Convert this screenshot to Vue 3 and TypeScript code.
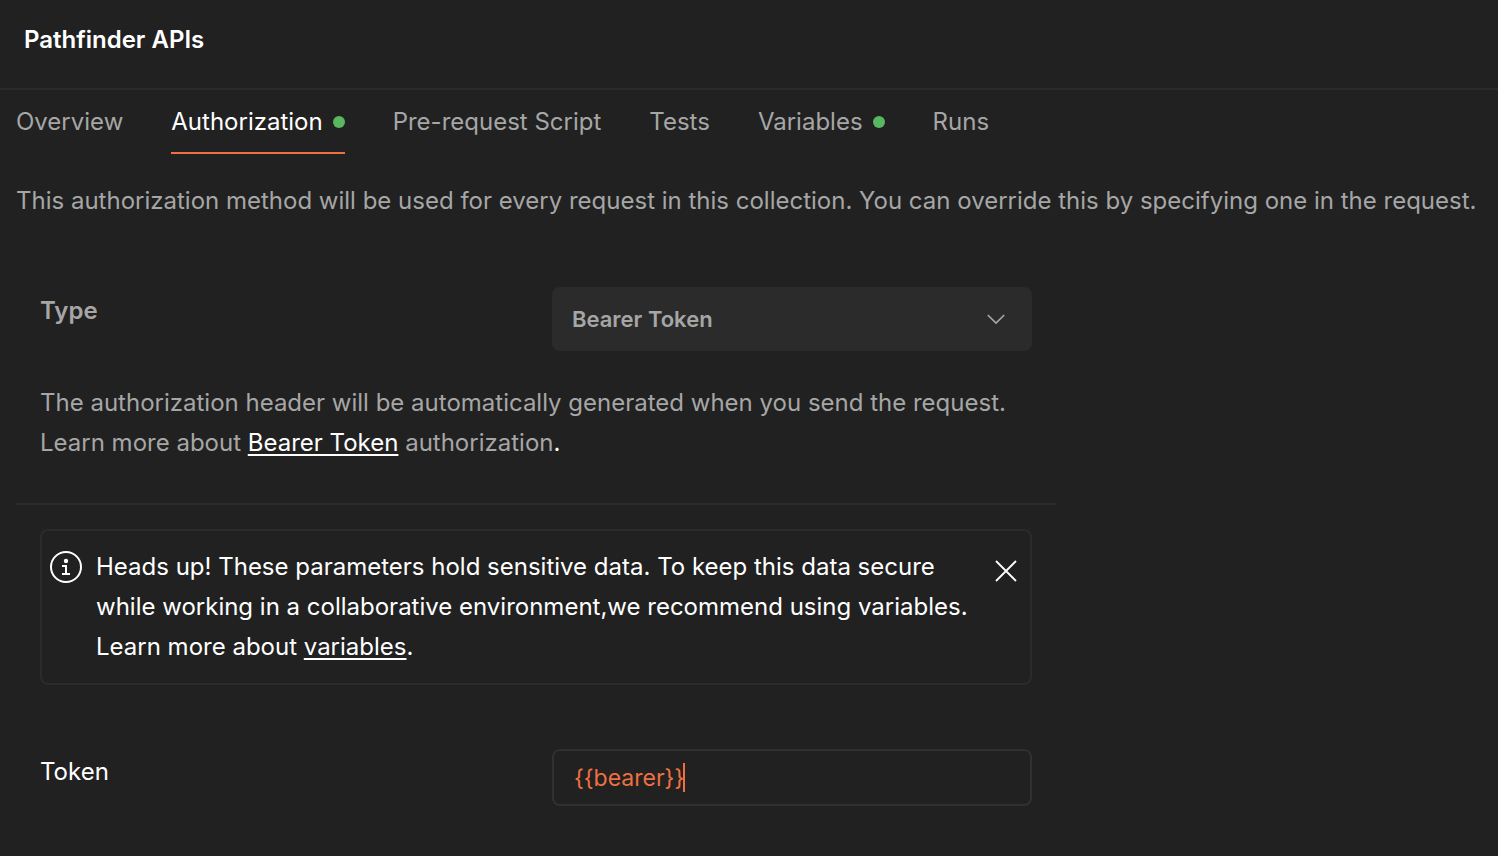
<script setup lang="ts">
import { nextTick, onMounted, ref, watch } from 'vue'

interface Tab {
  label: string
  configured: boolean
}

const tabs: Tab[] = [
  { label: 'Overview', configured: false },
  { label: 'Authorization', configured: true },
  { label: 'Pre-request Script', configured: false },
  { label: 'Tests', configured: false },
  { label: 'Variables', configured: true },
  { label: 'Runs', configured: false },
]

const activeTab = ref('Authorization')
const authType = ref('Bearer Token')
const noticeVisible = ref(true)
const token = ref('{' + '{bearer}}')
const tokenInput = ref<HTMLInputElement | null>(null)
const caretLeft = ref(0)

// Places the caret right after the last character of the token.
function placeCaret(): void {
  const input = tokenInput.value
  const context = document.createElement('canvas').getContext('2d')
  if (!input || !context) return
  const style = getComputedStyle(input)
  context.font = `${style.fontWeight} ${style.fontSize} ${style.fontFamily}`
  const inset = parseInt(style.paddingLeft) + parseInt(style.borderLeftWidth)
  caretLeft.value = Math.round(inset + context.measureText(token.value).width) - 1
}

onMounted(placeCaret)
watch(token, () => nextTick(placeCaret))
</script>

<template>
  <div class="page">
    <header class="header">
      <h1 class="title">Pathfinder APIs</h1>
    </header>

    <nav class="tabs" role="tablist">
      <button
        v-for="tab in tabs"
        :key="tab.label"
        type="button"
        role="tab"
        class="tab"
        :class="{ active: tab.label === activeTab }"
        :aria-selected="tab.label === activeTab"
        @click="activeTab = tab.label"
      >
        <span>{{ tab.label }}</span>
        <span v-if="tab.configured" class="dot"></span>
      </button>
    </nav>

    <main class="content">
      <p class="intro">
        This authorization method will be used for every request in this collection. You can
        override this by specifying one in the request.
      </p>

      <section class="type-section">
        <div class="row">
          <label class="type-label" for="auth-type">Type</label>
          <div class="select-wrap">
            <select id="auth-type" v-model="authType" class="select">
              <option>Bearer Token</option>
            </select>
            <svg class="chevron" viewBox="0 0 20 12" fill="none" aria-hidden="true">
              <path d="M1.8 2L10 10L18.2 2" stroke="currentColor" stroke-width="1.7" />
            </svg>
          </div>
        </div>
        <p class="help">
          The authorization header will be automatically generated when you send the request.
          Learn more about <a href="#bearer-token">Bearer Token</a> authorization<span class="stop">.</span>
        </p>
      </section>

      <section class="token-section">
        <div v-if="noticeVisible" class="notice">
          <svg class="info" viewBox="0 0 32 32" fill="none" aria-hidden="true">
            <circle cx="16" cy="16" r="15" stroke="currentColor" stroke-width="2" />
            <circle cx="16" cy="10" r="2.2" fill="currentColor" />
            <path d="M12 15H16V23M12 23H20" stroke="currentColor" stroke-width="2" />
          </svg>
          <p class="notice-text">
            Heads up! These parameters hold sensitive data. To keep this data secure while working
            in a collaborative environment,we recommend using variables. Learn more about
            <a href="#variables">variables</a>.
          </p>
          <button type="button" class="close" aria-label="Dismiss" @click="noticeVisible = false">
            <svg viewBox="0 0 22 22" fill="none" aria-hidden="true">
              <path d="M1 1L21 21M21 1L1 21" stroke="currentColor" stroke-width="1.8" />
            </svg>
          </button>
        </div>

        <div class="row">
          <label class="token-label" for="token">Token</label>
          <div class="token-wrap">
            <input
              id="token"
              ref="tokenInput"
              v-model="token"
              class="token-input"
              type="text"
              spellcheck="false"
            />
            <span class="caret" :style="{ left: caretLeft + 'px' }"></span>
          </div>
        </div>
      </section>
    </main>
  </div>
</template>

<style>
body {
  margin: 0;
  background: #212121;
}
</style>

<style scoped>
.page {
  min-height: 100vh;
  background: #212121;
  color: #a6a6a6;
  font-family: Inter, "Liberation Sans", sans-serif;
  font-size: 24px;
  line-height: 40px;
}

.page *,
.page {
  box-sizing: border-box;
}

.header {
  padding: 20px 24px 28px;
  border-bottom: 2px solid #2b2b2b;
}

.title {
  margin: 0;
  color: #fff;
  font-size: 24px;
  font-weight: 600;
}

.tabs {
  display: flex;
  gap: 48px;
  padding: 0 16px;
}

.tab {
  display: flex;
  align-items: center;
  gap: 10px;
  height: 64px;
  padding: 2px 0 0;
  border: 0;
  border-bottom: 2px solid transparent;
  background: none;
  color: inherit;
  font: inherit;
  white-space: nowrap;
  cursor: pointer;
}

.tab.active {
  border-bottom-color: #ee7042;
  color: #fff;
}

.dot {
  width: 12px;
  height: 12px;
  border-radius: 50%;
  background: #58b75f;
}

.content {
  padding: 27px 16px 48px;
}

.intro {
  margin: 0;
}

.type-section,
.token-section {
  max-width: 1040px;
  padding: 0 24px;
}

.type-section {
  margin-top: 66px;
  padding-bottom: 40px;
  border-bottom: 2px solid #2b2b2b;
}

.row {
  display: grid;
  grid-template-columns: minmax(0, 1fr) 480px;
  align-items: start;
}

.type-label {
  padding-top: 4px;
  font-weight: 600;
}

.select-wrap,
.token-wrap {
  position: relative;
}

.select {
  display: block;
  width: 100%;
  height: 64px;
  padding: 0 20px;
  border: 0;
  border-radius: 8px;
  appearance: none;
  background: #2b2b2b;
  color: inherit;
  font: inherit;
  font-size: 22px;
  font-weight: 600;
}

.chevron {
  position: absolute;
  top: 26px;
  right: 26px;
  width: 20px;
  height: 12px;
  pointer-events: none;
}

.help {
  margin: 32px 0 0;
}

a {
  color: #fff;
  text-decoration: underline;
  text-decoration-thickness: 2px;
  text-underline-offset: 3px;
}

.stop {
  color: #fff;
}

.token-section {
  padding-top: 24px;
}

.notice {
  display: flex;
  align-items: flex-start;
  margin-bottom: 64px;
  padding: 16px 13px 16px 8px;
  border: 2px solid #2b2b2b;
  border-radius: 8px;
  color: #fff;
}

.info {
  flex: none;
  width: 32px;
  height: 32px;
  margin: 4px 14px 0 0;
}

.notice-text {
  flex: 1;
  margin: 0 24px 0 0;
}

.close {
  flex: none;
  height: 22px;
  margin-top: 13px;
  padding: 0;
  border: 0;
  background: none;
  color: inherit;
  cursor: pointer;
}

.close svg {
  display: block;
  width: 22px;
  height: 22px;
}

.token-label {
  padding-top: 3px;
  color: #fff;
}

.token-input {
  display: block;
  width: 100%;
  height: 57px;
  padding: 0 20px;
  border: 2px solid #303030;
  border-radius: 8px;
  outline: none;
  background: transparent;
  color: #ee7042;
  font: inherit;
  font-size: 23px;
}

.caret {
  position: absolute;
  top: 14px;
  width: 2px;
  height: 29px;
  background: #ee7042;
}
</style>
